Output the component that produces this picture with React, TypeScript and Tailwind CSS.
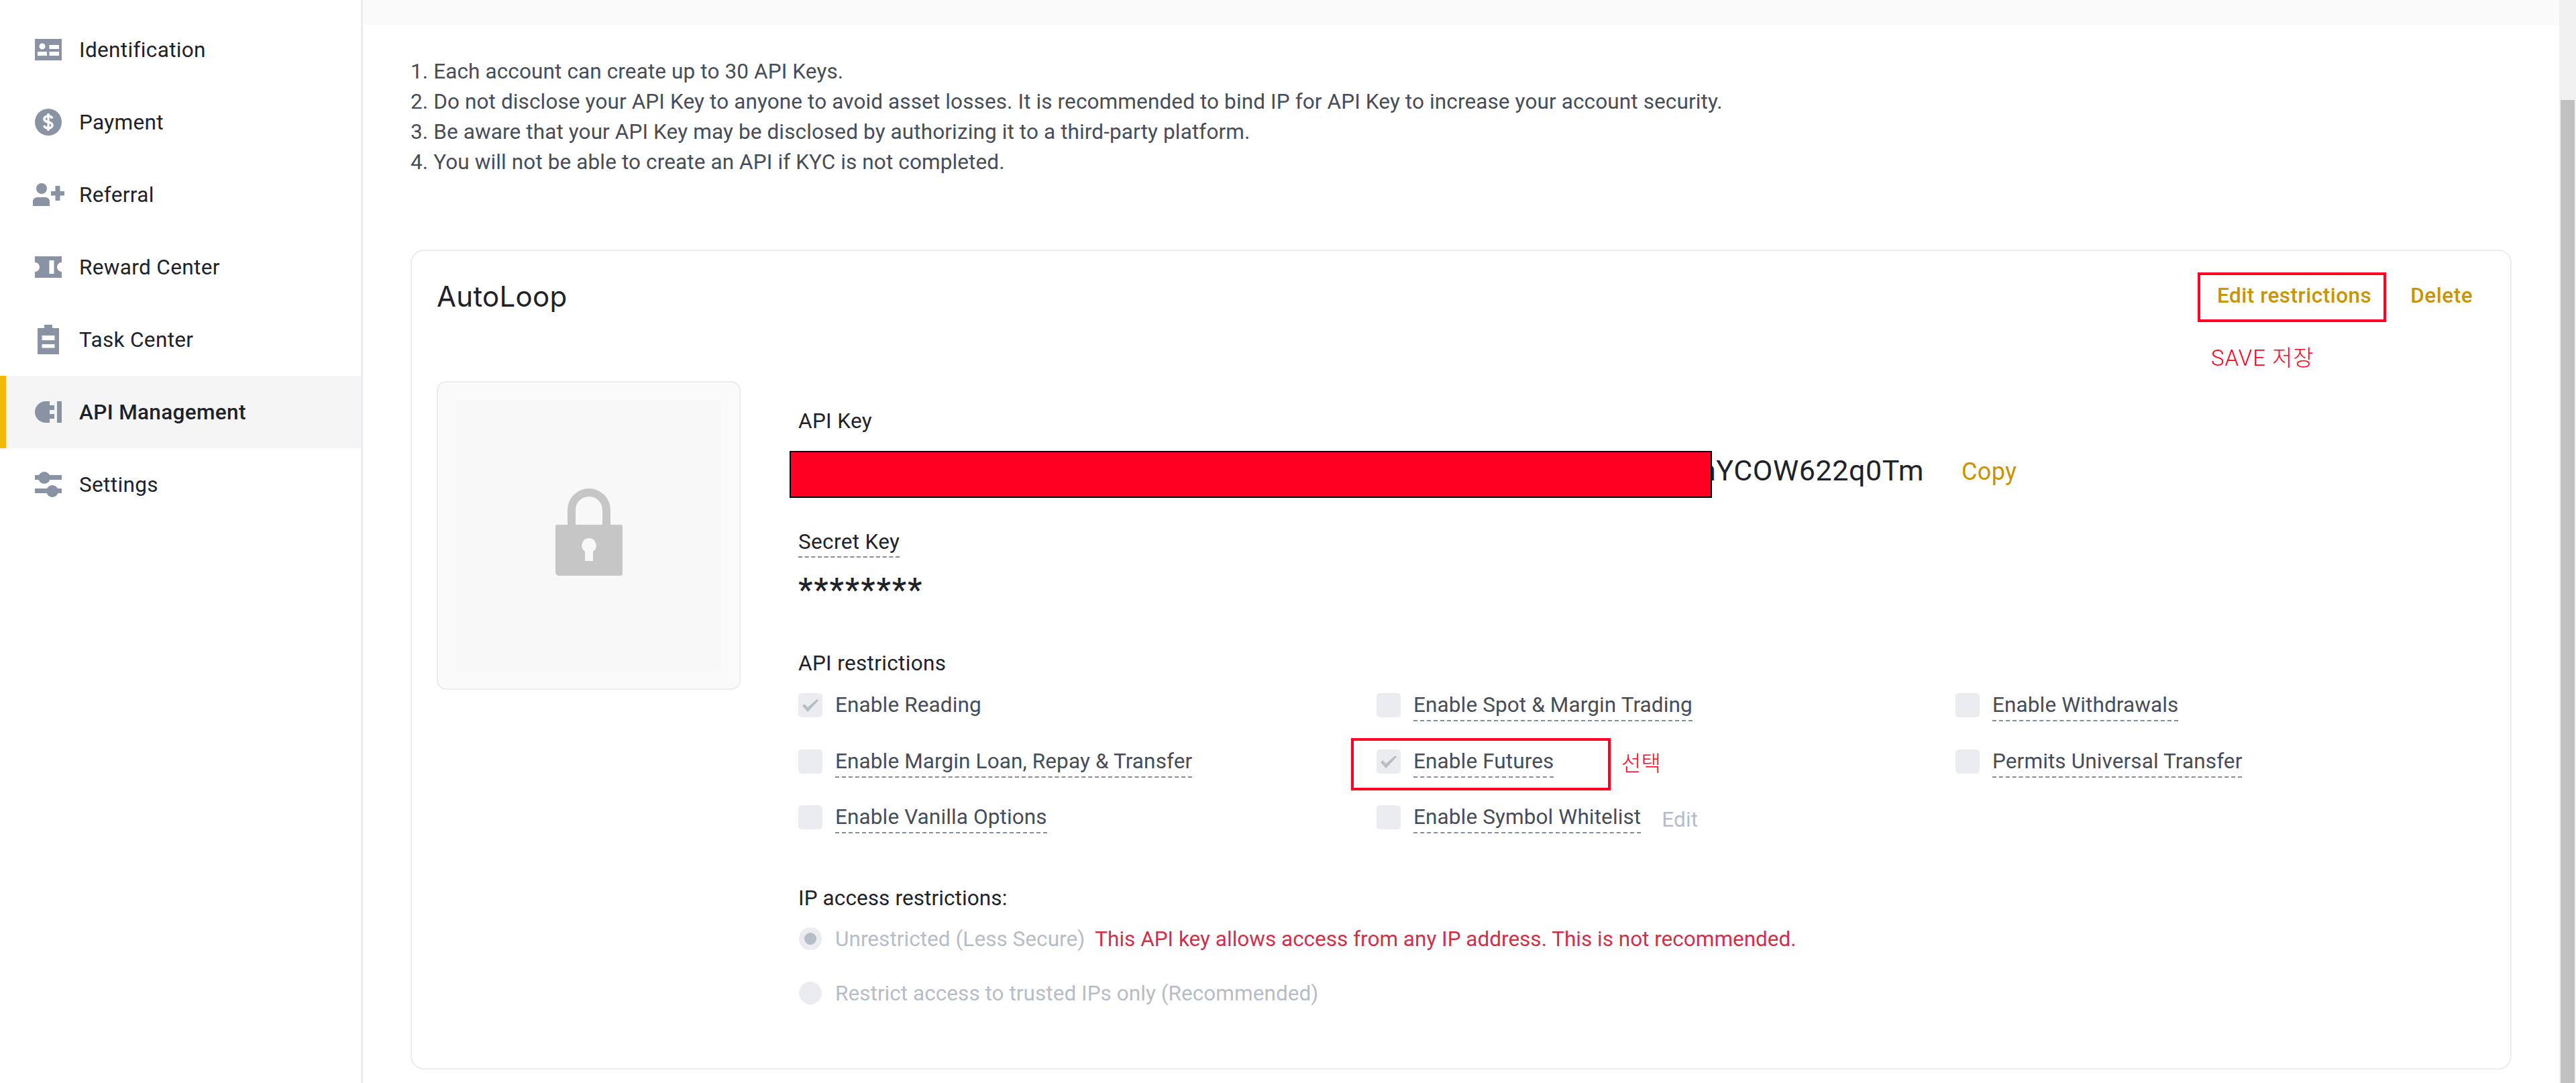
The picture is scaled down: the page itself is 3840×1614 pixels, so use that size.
import React from "react";

const Id = () => (
  <svg width="40" height="32" viewBox="0 0 40 32">
    <rect width="40" height="32" fill="#8a93a3" />
    <circle cx="11" cy="11" r="4.5" fill="#fff" />
    <rect x="4" y="19" width="14" height="6" fill="#fff" />
    <rect x="21.5" y="9" width="14.5" height="6" fill="#fff" />
    <rect x="21.5" y="19" width="14.5" height="6" fill="#fff" />
  </svg>
);
const Pay = () => (
  <svg width="40" height="40" viewBox="0 0 40 40">
    <circle cx="20" cy="20" r="20" fill="#8a93a3" />
    <path d="M26 14.5c-1-2.5-3.5-3.5-6-3.5-3.5 0-6 1.8-6 4.5 0 6 12 3 12 9 0 2.8-2.5 4.5-6 4.5-3 0-5.5-1.2-6.5-3.8" fill="none" stroke="#fff" strokeWidth="3.6" />
    <rect x="18.4" y="7" width="3.2" height="26" fill="#fff" />
  </svg>
);
const Ref = () => (
  <svg className="shrink-0" width="47" height="34" viewBox="0 0 47 34" fill="#8a93a3">
    <circle cx="13" cy="8" r="8" />
    <path d="M0 34V27a6 6 0 0 1 6-6h13a6 6 0 0 1 6 6v7z" />
    <rect x="27" y="12" width="20" height="6.5" />
    <rect x="33.5" y="4" width="7" height="22" />
  </svg>
);
const Reward = () => (
  <svg width="40" height="32" viewBox="0 0 40 32">
    <path d="M0 0H40V9a7 7 0 0 0 0 14V32H0V23a7 7 0 0 0 0-14Z" fill="#8a93a3" />
    <rect x="21.5" y="6" width="7" height="20" fill="#fff" />
  </svg>
);
const Task = () => (
  <svg width="32" height="44" viewBox="0 0 32 44">
    <rect y="5" width="32" height="39" fill="#8a93a3" />
    <rect x="10" width="12" height="6" fill="#8a93a3" />
    <rect x="6.5" y="16" width="19" height="7" fill="#fff" />
    <rect x="6.5" y="29" width="19" height="5.5" fill="#fff" />
  </svg>
);
const Api = () => (
  <svg width="40" height="32" viewBox="0 0 40 32" fill="#8a93a3">
    <path d="M22 0H16A16 16 0 0 0 16 32H22Z" />
    <rect x="22" y="6" width="7" height="7" />
    <rect x="22" y="19" width="7" height="7" />
    <rect x="33" width="7" height="32" />
  </svg>
);
const Set = () => (
  <svg width="40" height="38" viewBox="0 0 40 38" fill="#8a93a3">
    <rect y="5" width="40" height="7" />
    <circle cx="14" cy="9" r="9" />
    <rect y="25" width="40" height="7" />
    <circle cx="26" cy="29" r="9" />
  </svg>
);

const nav: [string, React.ReactNode][] = [
  ["Identification", <Id />],
  ["Payment", <Pay />],
  ["Referral", <Ref />],
  ["Reward Center", <Reward />],
  ["Task Center", <Task />],
  ["API Management", <Api />],
  ["Settings", <Set />],
];

const Check = ({ on, label, dashed = true, children }: { on?: boolean; label: string; dashed?: boolean; children?: React.ReactNode }) => (
  <div className="relative flex items-start gap-[19px] tracking-[0.12px]">
    <span className="w-[36px] h-[36px] shrink-0 rounded-[5px] bg-[#eaecef] block">
      {on && (
        <svg width="36" height="36" viewBox="0 0 36 36">
          <path d="M6 19l3-3 5 5L28 9l2 2-16 17z" fill="#b7bdc6" />
        </svg>
      )}
    </span>
    <span className={"text-[#474d57] leading-[36px] pb-[4px] border-b-2 border-dashed " + (dashed ? "border-[#848e9c]" : "border-transparent")}>{label}</span>
    {children}
  </div>
);

const Radio = ({ on, children }: { on?: boolean; children: React.ReactNode }) => (
  <div className="flex items-center gap-[20px] ml-px h-[34px]">
    <span className="w-[34px] h-[34px] rounded-full bg-[#eaecef] flex items-center justify-center shrink-0">
      {on && <span className="w-[18px] h-[18px] rounded-full bg-[#b7bdc6]" />}
    </span>
    <div className="flex gap-[15px] text-[#b7bdc6] pt-[2px] tracking-[0.05px]">{children}</div>
  </div>
);

export default function App() {
  return (
    <div className="flex w-[3840px] h-[1614px] overflow-hidden bg-white text-[31.5px] text-[#1e2329] tracking-[0.35px] font-['Roboto','Noto_Sans_CJK_KR',sans-serif]">
      <aside className="w-[541px] shrink-0 border-r-[3px] border-[#eaecef] pt-[20px]">
        {nav.map(([t, ic], i) => (
          <div key={t} className={"h-[108px] flex items-center gap-[26px] pl-[52px] " + (i === 5 ? "relative bg-[#f5f5f5] font-medium" : "")}>
            {i === 5 && <span className="absolute left-0 top-0 w-[9px] h-full bg-[#f0b90b]" />}
            <span className="w-[40px] flex justify-center">{ic}</span>
            <span className="pt-[2px]">{t}</span>
          </div>
        ))}
      </aside>

      <main className="flex-1 min-w-0">
        <div className="h-[37px] bg-[#fafafa]" />
        <div className="pl-[71px] pr-[71px]">
          <div className="mt-[47px] leading-[45px] text-[#474d57] tracking-[0.12px]">
            <p>1. Each account can create up to 30 API Keys.</p>
            <p>2. Do not disclose your API Key to anyone to avoid asset losses. It is recommended to bind IP for API Key to increase your account security.</p>
            <p>3. Be aware that your API Key may be disclosed by authorizing it to a third-party platform.</p>
            <p>4. You will not be able to create an API if KYC is not completed.</p>
          </div>

          <section className="mt-[108px] h-[1222px] border-2 border-[#eaecef] rounded-[20px]">
            <div className="h-[134px] flex items-center justify-between pl-[37px] pr-[56px]">
              <h2 className="font-['Inter',sans-serif] text-[42px] tracking-[0.3px]">AutoLoop</h2>
              <div className="flex gap-[58px] text-[#c99400] font-medium tracking-[0.5px]">
                <span className="relative">
                  Edit restrictions
                  <span className="absolute -left-[29px] -right-[22px] -top-[11px] h-[74px] border-4 border-[#ff0022]" />
                  <span className="absolute -left-[9px] top-[92px] whitespace-nowrap text-[33px] font-light tracking-[1px] text-[#ff0022]">SAVE 저장</span>
                </span>
                <span>Delete</span>
              </div>
            </div>

            <div className="flex pl-[37px]">
              <div className="mt-[60px] w-[453px] h-[460px] shrink-0 rounded-[14px] border-2 border-[#eaecef] bg-[#fafafa] p-[27px]">
                <div className="w-full h-full bg-[#f8f8f8] flex items-center justify-center">
                  <svg className="-mt-[12px]" width="102" height="132" viewBox="0 0 102 132" fill="#c6c6c6">
                    <path d="M19 62V34a32 32 0 0 1 64 0V62H71V34a20 20 0 0 0-40 0V62Z" />
                    <path fillRule="evenodd" d="M4 56H98a3 3 0 0 1 3 3V129a3 3 0 0 1-3 3H6a5 5 0 0 1-5-5V59a3 3 0 0 1 3-3ZM51 76a11 11 0 0 0-6 20V110H57V96a11 11 0 0 0-6-20Z" />
                  </svg>
                </div>
              </div>

              <div className="ml-[86px] flex-1 pt-[97px]">
                <div className="leading-[45px]">API Key</div>
                <div className="mt-[22px] h-[70px] flex items-start relative">
                  <div className="relative z-10 -ml-[13px] w-[1375px] h-[70px] shrink-0 bg-[#ff0022] border-2 border-black" />
                  <span className="-ml-[18px] text-[43px] leading-[58px] tracking-[0.6px] whitespace-nowrap">nYCOW622q0Tm</span>
                  <span className="ml-[56px] text-[36px] leading-[62px] text-[#c99400]">Copy</span>
                </div>

                <div className="mt-[42px]">
                  <span className="inline-block leading-[43px] border-b-2 border-dashed border-[#848e9c]">Secret Key</span>
                </div>
                <div className="mt-[20px] text-[48px] font-medium leading-[56px] tracking-[2px]">********</div>

                <div className="mt-[59px] leading-[45px]">API restrictions</div>
                <div className="mt-[22px] grid grid-cols-[862px_863px_1fr] auto-rows-[83.5px]">
                  <Check on label="Enable Reading" dashed={false} />
                  <Check label="Enable Spot & Margin Trading" />
                  <Check label="Enable Withdrawals" />
                  <Check label="Enable Margin Loan, Repay & Transfer" />
                  <Check on label="Enable Futures">
                    <span className="absolute -left-[38px] -top-[17px] w-[387px] h-[78px] border-4 border-[#ff0022]" />
                    <span className="absolute left-[365px] top-0 text-[32px] leading-[42px] font-light text-[#ff0022]">선택</span>
                  </Check>
                  <Check label="Permits Universal Transfer" />
                  <Check label="Enable Vanilla Options" />
                  <Check label="Enable Symbol Whitelist">
                    <span className="text-[#b7bdc6] ml-[12px] pt-[4px] leading-[36px]">Edit</span>
                  </Check>
                </div>

                <div className="mt-[32px] leading-[45px] tracking-[0.1px]">IP access restrictions:</div>
                <div className="mt-[21px]">
                  <Radio on>
                    <span>Unrestricted (Less Secure)</span>
                    <span className="text-[#cf304a] tracking-[0px]">This API key allows access from any IP address. This is not recommended.</span>
                  </Radio>
                </div>
                <div className="mt-[47px]">
                  <Radio>
                    <span>Restrict access to trusted IPs only (Recommended)</span>
                  </Radio>
                </div>
              </div>
            </div>
          </section>
        </div>
      </main>

      <div className="w-[25px] shrink-0 bg-[#f1f1f1] pt-[149px] px-[2px]">
        <div className="h-full bg-[#c1c1c1]" />
      </div>
    </div>
  );
}
